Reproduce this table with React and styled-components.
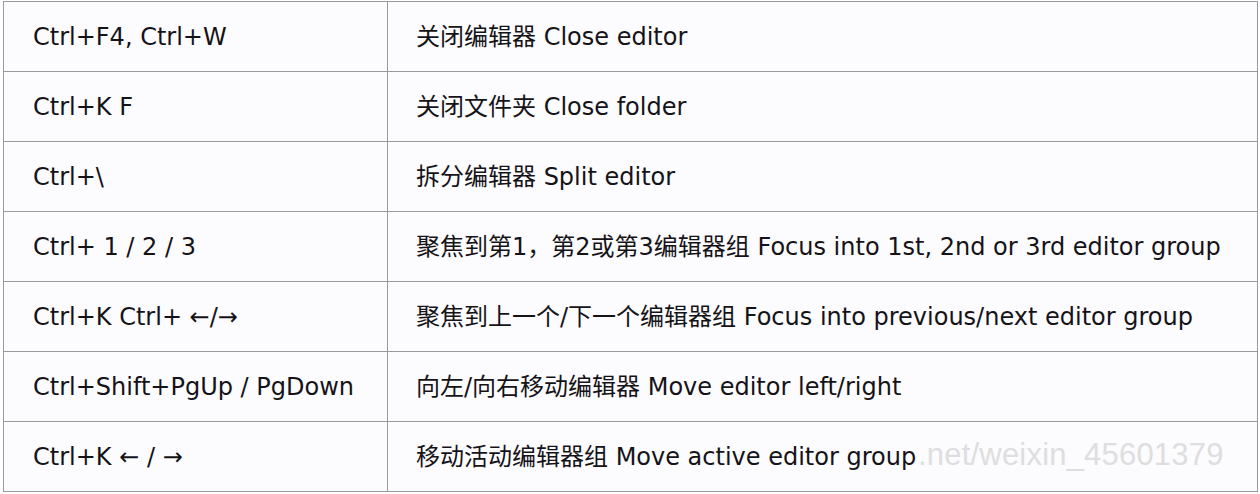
import React from 'react';
import styled, { createGlobalStyle } from 'styled-components';

const GlobalStyle = createGlobalStyle`
  html, body {
    margin: 0;
    padding: 0;
    background: #ffffff;
  }
`;

const Page = styled.div`
  position: relative;
  width: 1260px;
  height: 494px;
  padding: 1px 2px 0 3px;
  box-sizing: border-box;
  overflow: hidden;
  font-family: "DejaVu Sans", Verdana, "Noto Sans CJK SC", sans-serif;
  color: #151318;
`;

const Table = styled.table`
  width: 1255px;
  border-collapse: collapse;
  table-layout: fixed;
  background: #fcfbfd;
`;

const KeyCol = styled.col`
  width: 384px;
`;

const Row = styled.tr`
  height: 70px;
`;

const Cell = styled.td`
  border: 1px solid #9a9a9c;
  padding: 0 0 0 ${(p) => p.$pad}px;
  font-size: 24px;
  line-height: 28px;
  white-space: nowrap;
  vertical-align: middle;
`;

const Watermark = styled.div`
  position: absolute;
  left: 918px;
  top: 437px;
  font-family: "Liberation Sans", Arial, sans-serif;
  font-size: 31px;
  color: #dededf;
  letter-spacing: 0.2px;
  pointer-events: none;
`;

const rows = [
  ['Ctrl+F4, Ctrl+W', '关闭编辑器 Close editor'],
  ['Ctrl+K F', '关闭文件夹 Close folder'],
  ['Ctrl+\\', '拆分编辑器 Split editor'],
  ['Ctrl+ 1 / 2 / 3', '聚焦到第1，第2或第3编辑器组 Focus into 1st, 2nd or 3rd editor group'],
  ['Ctrl+K Ctrl+ ←/→', '聚焦到上一个/下一个编辑器组 Focus into previous/next editor group'],
  ['Ctrl+Shift+PgUp / PgDown', '向左/向右移动编辑器 Move editor left/right'],
  ['Ctrl+K ← / →', '移动活动编辑器组 Move active editor group'],
];

export default function App() {
  return (
    <Page>
      <GlobalStyle />
      <Table>
        <colgroup>
          <KeyCol />
          <col />
        </colgroup>
        <tbody>
          {rows.map(([keys, desc]) => (
            <Row key={keys}>
              <Cell $pad={29}>{keys}</Cell>
              <Cell $pad={28}>{desc}</Cell>
            </Row>
          ))}
        </tbody>
      </Table>
      <Watermark>.net/weixin_45601379</Watermark>
    </Page>
  );
}
